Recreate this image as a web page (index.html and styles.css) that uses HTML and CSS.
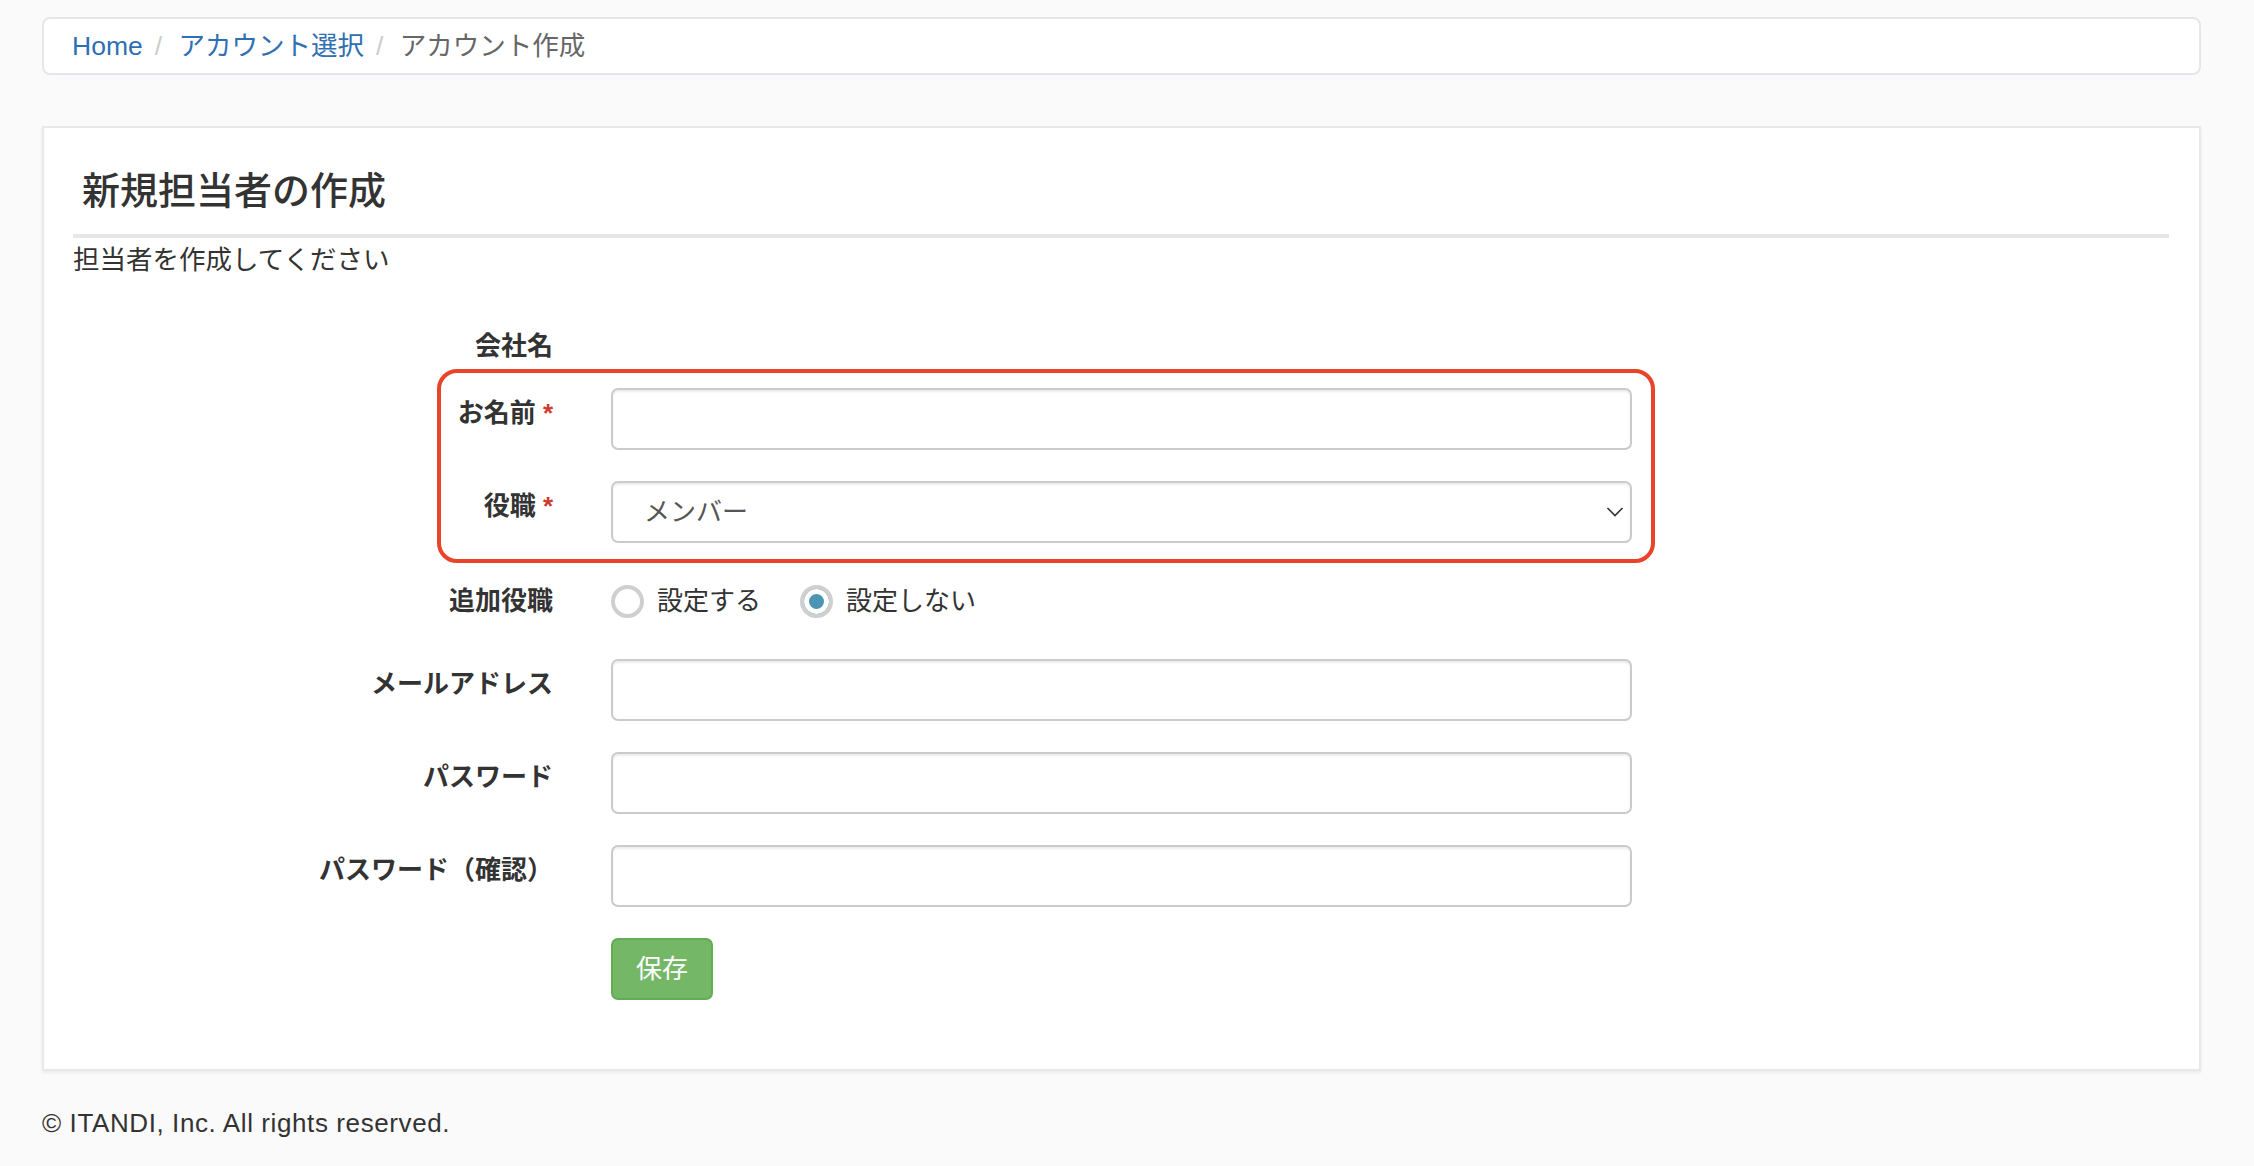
FILE: index.html
```html
<!DOCTYPE html>
<html lang="ja">
<head>
    <meta charset="UTF-8">
    <meta name="viewport" content="width=device-width, initial-scale=1.0">
    <title>アカウント作成</title>
    <link rel="stylesheet" href="styles.css">
</head>
<body>
    <div class="page">
        <ol class="breadcrumb">
            <li><a href="#">Home</a></li>
            <li><a href="#">アカウント選択</a></li>
            <li class="active">アカウント作成</li>
        </ol>

        <div class="panel">
            <div class="page-header">
                <h3>新規担当者の作成</h3>
            </div>
            <p class="lead-text">担当者を作成してください</p>

            <form class="account-form" onsubmit="return false;">
                <div class="form-row static-row">
                    <label>会社名</label>
                    <div></div>
                </div>

                <!-- 注目枠 -->
                <div class="highlight">
                    <div class="form-row">
                        <label for="name">お名前<span class="required">*</span></label>
                        <input type="text" id="name" class="form-control">
                    </div>
                    <div class="form-row">
                        <label for="role">役職<span class="required">*</span></label>
                        <div class="select-wrap">
                            <select id="role" class="form-control">
                                <option>メンバー</option>
                                <option>管理者</option>
                            </select>
                            <svg class="chevron" width="18" height="11" viewBox="0 0 18 11">
                                <path d="M1.5 1.5 L9 9 L16.5 1.5" fill="none" stroke="#333" stroke-width="1.6"/>
                            </svg>
                        </div>
                    </div>
                </div>

                <div class="form-row radio-row">
                    <label>追加役職</label>
                    <div class="radio-group">
                        <label class="radio-option"><input type="radio" name="extra"> 設定する</label>
                        <label class="radio-option"><input type="radio" name="extra" checked> 設定しない</label>
                    </div>
                </div>

                <div class="form-row">
                    <label for="email">メールアドレス</label>
                    <input type="email" id="email" class="form-control">
                </div>
                <div class="form-row">
                    <label for="password">パスワード</label>
                    <input type="password" id="password" class="form-control">
                </div>
                <div class="form-row">
                    <label for="password-confirm">パスワード（確認）</label>
                    <input type="password" id="password-confirm" class="form-control">
                </div>

                <div class="form-row">
                    <div></div>
                    <div><button type="submit" class="btn-save">保存</button></div>
                </div>
            </form>
        </div>

        <footer class="footer">© ITANDI, Inc. All rights reserved.</footer>
    </div>
</body>
</html>
```

FILE: styles.css
```css
* {
    margin: 0;
    padding: 0;
    box-sizing: border-box;
}

body {
    font-family: 'Liberation Sans', 'Noto Sans CJK JP', sans-serif;
    font-size: 26px;
    line-height: 36px;
    color: #333;
    background: #fafafa;
}

.page {
    width: 2159px;
    margin-left: 42px;
    padding-top: 17px;
}

.breadcrumb {
    list-style: none;
    display: flex;
    align-items: center;
    height: 58px;
    padding: 0 28px;
    font-size: 26.5px;
    background: white;
    border: 2px solid #e4e6ea;
    border-radius: 8px;
}

.breadcrumb li + li::before {
    content: "/\00a0";
    color: #ccc;
    padding: 0 9px 0 12px;
}

.breadcrumb a {
    color: #2f6fb3;
    text-decoration: none;
}

.breadcrumb .active {
    color: #666;
}

.panel {
    margin-top: 51px;
    background: white;
    border: 2px solid #e8e8e8;
    box-shadow: 0 2px 3px rgba(0,0,0,0.06);
    padding: 0 30px 38px 29px;
}

.page-header {
    padding-top: 43px;
    padding-bottom: 23px;
    border-bottom: 4px solid #e7e7e9;
}

.page-header h3 {
    font-size: 38px;
    line-height: 40px;
    font-weight: 500;
    padding-left: 9px;
}

.lead-text {
    margin-top: 4px;
    font-size: 26.5px;
}

.account-form {
    margin-top: 43px;
}

.form-row {
    display: grid;
    grid-template-columns: 480px 1021px;
    column-gap: 58px;
    margin-bottom: 31px;
}

.form-row > label {
    text-align: right;
    font-weight: bold;
    padding-top: 7px;
}

.required {
    color: #cf3b32;
    margin-left: 7px;
}

.static-row {
    margin-bottom: 5px;
}

.highlight {
    width: 1218px;
    margin: 0 0 7px 364px;
    padding: 15px 19px 16px 0;
    border: 4px solid #e9432a;
    border-radius: 20px;
}

.highlight .form-row {
    grid-template-columns: 112px 1021px;
}

.highlight .form-row:last-child {
    margin-bottom: 0;
}

.form-control {
    display: block;
    width: 100%;
    height: 62px;
    padding: 0 31px;
    font: inherit;
    color: #555;
    background: white;
    border: 2px solid #cbcbcb;
    border-radius: 7px;
    box-shadow: inset 0 2px 2px rgba(0,0,0,0.075);
    outline: none;
}

select.form-control {
    appearance: none;
    -webkit-appearance: none;
}

.select-wrap {
    position: relative;
}

.chevron {
    position: absolute;
    right: 8px;
    top: 50%;
    transform: translateY(-50%);
    pointer-events: none;
}

.radio-row {
    height: 62px;
    align-items: center;
    margin-bottom: 27px;
}

.radio-row > label {
    padding-top: 0;
}

.radio-group {
    display: flex;
    align-items: center;
    gap: 39px;
}

.radio-option {
    display: flex;
    align-items: center;
    gap: 13px;
    cursor: pointer;
}

.radio-option input {
    appearance: none;
    -webkit-appearance: none;
    width: 33px;
    height: 33px;
    border: 4px solid #cfcfcf;
    border-radius: 50%;
    background: white;
    margin: 0;
}

.radio-option input:checked {
    background: #4b95b3;
    box-shadow: inset 0 0 0 5px white;
}

.btn-save {
    width: 102px;
    height: 62px;
    font: inherit;
    color: white;
    background: #74b767;
    border: 2px solid #62ad53;
    border-radius: 7px;
    cursor: pointer;
}

.btn-save:hover {
    background: #64a957;
}

.footer {
    margin-top: 34px;
    letter-spacing: 0.6px;
}
```
